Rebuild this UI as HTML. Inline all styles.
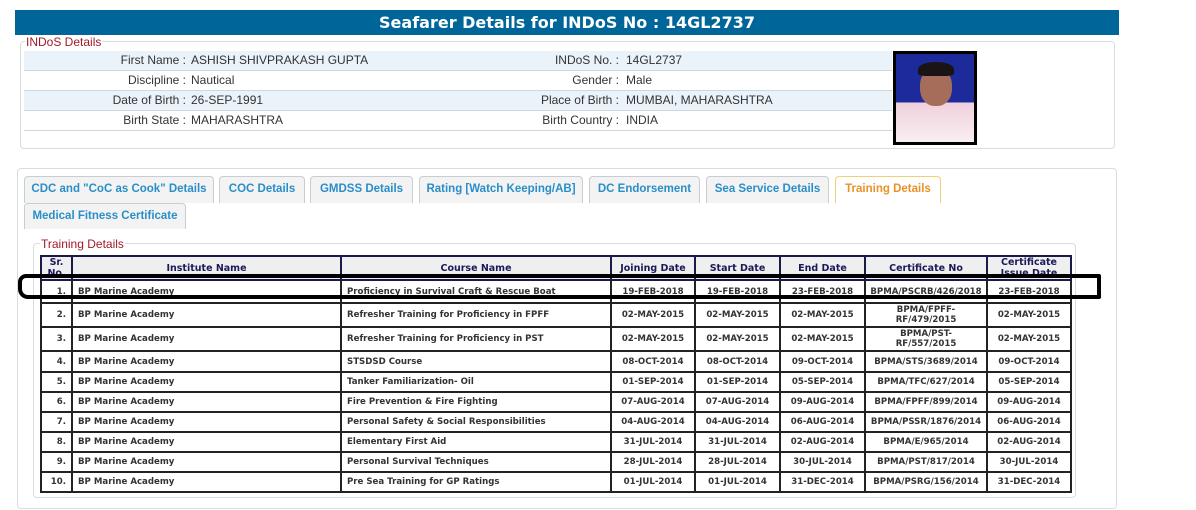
<!DOCTYPE html>
<html><head><style>
*{margin:0;padding:0;box-sizing:border-box}
body{width:1196px;height:510px;background:#fff;position:relative;font-family:"Liberation Sans",sans-serif;overflow:hidden}
.hdr{position:absolute;left:15px;top:10px;width:1104px;height:25px;background:#006699;color:#fff;font:bold 16px "DejaVu Sans",sans-serif;text-align:center;line-height:25px}
.fs1{position:absolute;left:20px;top:41px;width:1095px;height:108px;border:1px solid #d8dde2;border-radius:4px}
.lg{position:absolute;background:#fff;color:#a5182a;font-size:12px;padding:0 1px}
.row{position:absolute;left:24px;width:868px;height:20px;border-bottom:1px solid #cfd6dc;font-size:12px;color:#333;line-height:19px}
.row.b{background:#eaf2fa}
.row span{position:absolute;white-space:nowrap}
.l1{right:706px;text-align:right}.v1{left:167px}.l2{right:273px;text-align:right}.v2{left:602px}
.photo{position:absolute;left:893px;top:51px;width:84px;height:94px;border:3px solid #000;background:linear-gradient(#1c2a9a 0,#1c2a9a 55%,#f0d0dc 55%,#f8eef2 100%)}
.face{position:absolute;left:24px;top:14px;width:32px;height:38px;border-radius:45%;background:#a66e5a}
.hair{position:absolute;left:22px;top:8px;width:36px;height:14px;border-radius:50% 50% 20% 20%;background:#1a1416}
.panel{position:absolute;left:17px;top:168px;width:1100px;height:341px;border:1px solid #d8dde2;border-radius:4px}
.tab{position:absolute;height:27px;border:1px solid #c8cdd2;border-bottom:none;border-radius:4px 4px 0 0;background:#f3f3f3;color:#2a8ec8;font:bold 11.5px "Liberation Sans",sans-serif;text-align:center;line-height:25px;white-space:nowrap}
.tab.act{background:#fff;border-color:#f0d070;color:#e8922a}
.fs2{position:absolute;left:33px;top:243px;width:1043px;height:255px;border:1px solid #d8dde2;border-radius:4px}
table{position:absolute;left:40px;top:255px;width:1030px;border-collapse:collapse;table-layout:fixed;font:bold 8.6px "DejaVu Sans",Verdana,sans-serif;color:#333}
td,th{border:2px solid #222;padding:0 5px;overflow:hidden;white-space:nowrap}
th{background:#efefef;color:#1a1a5a;font-size:9.5px;line-height:11px;border-color:#1a1a4a}
td{text-align:center}
td.n{text-align:right;padding-right:5px}
td.t{text-align:left}
.ring{position:absolute;left:18px;top:274px;width:1083px;height:25px;border:4px solid #000;border-radius:8px 2px 2px 10px}
</style></head><body>
<div class="hdr">Seafarer Details for INDoS No : 14GL2737</div>
<div class="fs1"></div>
<div class="lg" style="left:25px;top:35px">INDoS Details</div>
<div class="row b" style="top:51px"><span class="l1">First Name :</span><span class="v1">ASHISH SHIVPRAKASH GUPTA</span><span class="l2">INDoS No. :</span><span class="v2">14GL2737</span></div>
<div class="row" style="top:71px"><span class="l1">Discipline :</span><span class="v1">Nautical</span><span class="l2">Gender :</span><span class="v2">Male</span></div>
<div class="row b" style="top:91px"><span class="l1">Date of Birth :</span><span class="v1">26-SEP-1991</span><span class="l2">Place of Birth :</span><span class="v2">MUMBAI, MAHARASHTRA</span></div>
<div class="row" style="top:111px"><span class="l1">Birth State :</span><span class="v1">MAHARASHTRA</span><span class="l2">Birth Country :</span><span class="v2">INDIA</span></div>
<div class="photo"><div class="face"></div><div class="hair"></div></div>

<div class="panel"></div>
<div class="tab" style="left:24px;top:176px;width:190px">CDC and "CoC as Cook" Details</div>
<div class="tab" style="left:219px;top:176px;width:86px">COC Details</div>
<div class="tab" style="left:310px;top:176px;width:103px">GMDSS Details</div>
<div class="tab" style="left:419px;top:176px;width:164px">Rating [Watch Keeping/AB]</div>
<div class="tab" style="left:589px;top:176px;width:111px">DC Endorsement</div>
<div class="tab" style="left:706px;top:176px;width:123px">Sea Service Details</div>
<div class="tab act" style="left:835px;top:176px;width:106px">Training Details</div>
<div class="tab" style="left:24px;top:203px;width:162px;height:26px">Medical Fitness Certificate</div>

<div class="fs2"></div>
<div class="lg" style="left:40px;top:237px">Training Details</div>
<table>
<colgroup><col style="width:31px"><col style="width:269px"><col style="width:270px"><col style="width:84px"><col style="width:85px"><col style="width:85px"><col style="width:122px"><col style="width:84px"></colgroup>
<tr style="height:21px"><th style="padding:0;vertical-align:top">Sr.<br>No.</th><th>Institute Name</th><th>Course Name</th><th>Joining Date</th><th>Start Date</th><th>End Date</th><th>Certificate No</th><th style="vertical-align:top;padding:0">Certificate<br>Issue Date</th></tr>
<tr style="height:23px"><td class="n">1.</td><td class="t">BP Marine Academy</td><td class="t">Proficiency in Survival Craft &amp; Rescue Boat</td><td>19-FEB-2018</td><td>19-FEB-2018</td><td>23-FEB-2018</td><td style="padding:0">BPMA/PSCRB/426/2018</td><td>23-FEB-2018</td></tr>
<tr style="height:24px"><td class="n">2.</td><td class="t">BP Marine Academy</td><td class="t">Refresher Training for Proficiency in FPFF</td><td>02-MAY-2015</td><td>02-MAY-2015</td><td>02-MAY-2015</td><td style="line-height:10px">BPMA/FPFF-<br>RF/479/2015</td><td>02-MAY-2015</td></tr>
<tr style="height:24px"><td class="n">3.</td><td class="t">BP Marine Academy</td><td class="t">Refresher Training for Proficiency in PST</td><td>02-MAY-2015</td><td>02-MAY-2015</td><td>02-MAY-2015</td><td style="line-height:10px">BPMA/PST-<br>RF/557/2015</td><td>02-MAY-2015</td></tr>
<tr style="height:21px"><td class="n">4.</td><td class="t">BP Marine Academy</td><td class="t">STSDSD Course</td><td>08-OCT-2014</td><td>08-OCT-2014</td><td>09-OCT-2014</td><td>BPMA/STS/3689/2014</td><td>09-OCT-2014</td></tr>
<tr style="height:20px"><td class="n">5.</td><td class="t">BP Marine Academy</td><td class="t">Tanker Familiarization- Oil</td><td>01-SEP-2014</td><td>01-SEP-2014</td><td>05-SEP-2014</td><td>BPMA/TFC/627/2014</td><td>05-SEP-2014</td></tr>
<tr style="height:20px"><td class="n">6.</td><td class="t">BP Marine Academy</td><td class="t">Fire Prevention &amp; Fire Fighting</td><td>07-AUG-2014</td><td>07-AUG-2014</td><td>09-AUG-2014</td><td>BPMA/FPFF/899/2014</td><td>09-AUG-2014</td></tr>
<tr style="height:20px"><td class="n">7.</td><td class="t">BP Marine Academy</td><td class="t">Personal Safety &amp; Social Responsibilities</td><td>04-AUG-2014</td><td>04-AUG-2014</td><td>06-AUG-2014</td><td style="padding:0">BPMA/PSSR/1876/2014</td><td>06-AUG-2014</td></tr>
<tr style="height:20px"><td class="n">8.</td><td class="t">BP Marine Academy</td><td class="t">Elementary First Aid</td><td>31-JUL-2014</td><td>31-JUL-2014</td><td>02-AUG-2014</td><td>BPMA/E/965/2014</td><td>02-AUG-2014</td></tr>
<tr style="height:20px"><td class="n">9.</td><td class="t">BP Marine Academy</td><td class="t">Personal Survival Techniques</td><td>28-JUL-2014</td><td>28-JUL-2014</td><td>30-JUL-2014</td><td>BPMA/PST/817/2014</td><td>30-JUL-2014</td></tr>
<tr style="height:20px"><td class="n">10.</td><td class="t">BP Marine Academy</td><td class="t">Pre Sea Training for GP Ratings</td><td>01-JUL-2014</td><td>01-JUL-2014</td><td>31-DEC-2014</td><td>BPMA/PSRG/156/2014</td><td>31-DEC-2014</td></tr>
</table>
<div class="ring"></div>
</body></html>
